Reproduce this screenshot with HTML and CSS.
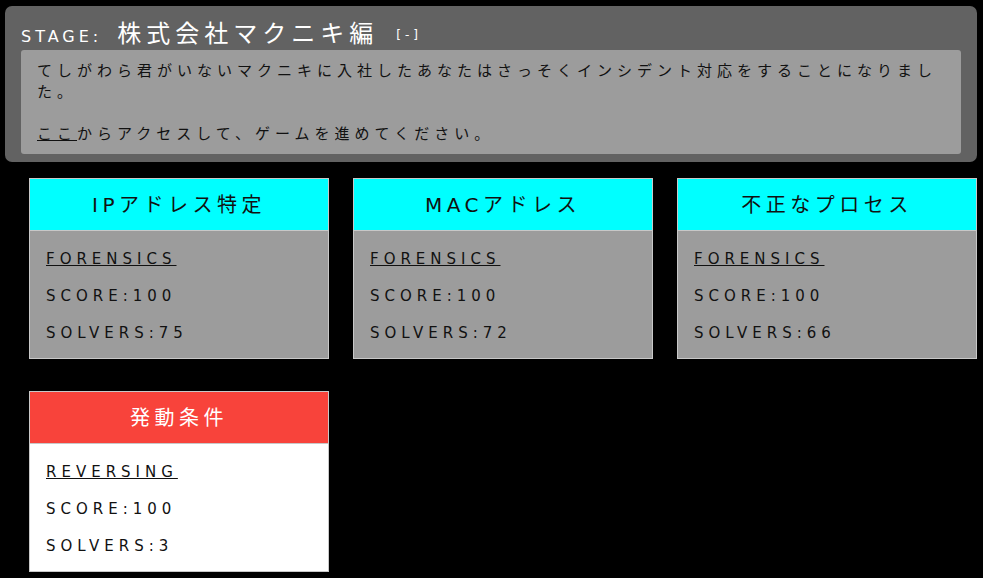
FILE: index.html
```html
<!DOCTYPE html>
<html lang="ja">
<head>
<meta charset="utf-8">
<link rel="stylesheet" href="styles.css">
</head>
<body>
<section class="stage">
  <h1 class="stage-title"><span class="label">STAGE:</span><span class="name">株式会社マクニキ編</span><span class="toggle">[-]</span></h1>
  <div class="stage-desc">てしがわら君がいないマクニキに入社したあなたはさっそくインシデント対応をすることになりました。<br><br><a href="#" class="link">ここ</a>からアクセスして、ゲームを進めてください。</div>
</section>
<div class="cards">
  <div class="card">
    <div class="card-head cyan">IPアドレス特定</div>
    <div class="card-body gray">
      <a href="#" class="cat">FORENSICS</a>
      <div class="row">SCORE:100</div>
      <div class="row">SOLVERS:75</div>
    </div>
  </div>
  <div class="card">
    <div class="card-head cyan">MACアドレス</div>
    <div class="card-body gray">
      <a href="#" class="cat">FORENSICS</a>
      <div class="row">SCORE:100</div>
      <div class="row">SOLVERS:72</div>
    </div>
  </div>
  <div class="card">
    <div class="card-head cyan">不正なプロセス</div>
    <div class="card-body gray">
      <a href="#" class="cat">FORENSICS</a>
      <div class="row">SCORE:100</div>
      <div class="row">SOLVERS:66</div>
    </div>
  </div>
  <div class="card">
    <div class="card-head red">発動条件</div>
    <div class="card-body white">
      <a href="#" class="cat">REVERSING</a>
      <div class="row">SCORE:100</div>
      <div class="row">SOLVERS:3</div>
    </div>
  </div>
</div>
</body>
</html>
```
FILE: styles.css
```css
html, body {
  margin: 0;
  padding: 0;
  background: #000;
}
body {
  padding: 6px 6px 0 5px;
  font-family: "DejaVu Sans", "Noto Sans CJK JP", sans-serif;
  color: #111;
}
.stage {
  background: #626262;
  border-radius: 7px;
  padding: 8px 16px 8px 16px;
}
.stage-title {
  margin: 0;
  font-weight: normal;
  color: #fff;
  height: 36px;
  line-height: 36px;
  white-space: nowrap;
  font-size: 16px;
}
.label {
  font-size: 16px;
  letter-spacing: 4px;
}
.name {
  font-size: 24px;
  letter-spacing: 5px;
  margin-left: 15px;
  font-family: "Noto Sans CJK JP", sans-serif;
  line-height: 36px;
}
.toggle {
  font-size: 12px;
  letter-spacing: 4px;
  vertical-align: 3px;
  margin-left: 18px;
}
.stage-desc {
  background: #9c9c9c;
  border-radius: 3px;
  padding: 9px 16px 11px 16px;
  font-size: 15px;
  line-height: 21px;
  letter-spacing: 5px;
  font-family: "Noto Sans CJK JP", sans-serif;
  color: #111;
}
.link {
  color: #111;
}
.cards {
  display: grid;
  grid-template-columns: repeat(3, 300px);
  column-gap: 24px;
  row-gap: 32px;
  padding: 16px 0 0 24px;
}
.card {
  border: 1px solid #c8c8c8;
}
.card-head {
  height: 51px;
  line-height: 53px;
  text-align: center;
  font-size: 20px;
  letter-spacing: 4.5px;
  border-bottom: 1px solid #c8c8c8;
}
.cyan { background: #00ffff; color: #111; }
.red { background: #f8433b; color: #fff; }
.card-body {
  padding: 10px 16px 6px 16px;
  font-size: 15px;
  letter-spacing: 5px;
}
.gray { background: #9c9c9c; }
.white { background: #fff; }
.cat, .row {
  display: block;
  line-height: 37px;
  color: #111;
}
.cat {
  display: inline-block;
}
```
